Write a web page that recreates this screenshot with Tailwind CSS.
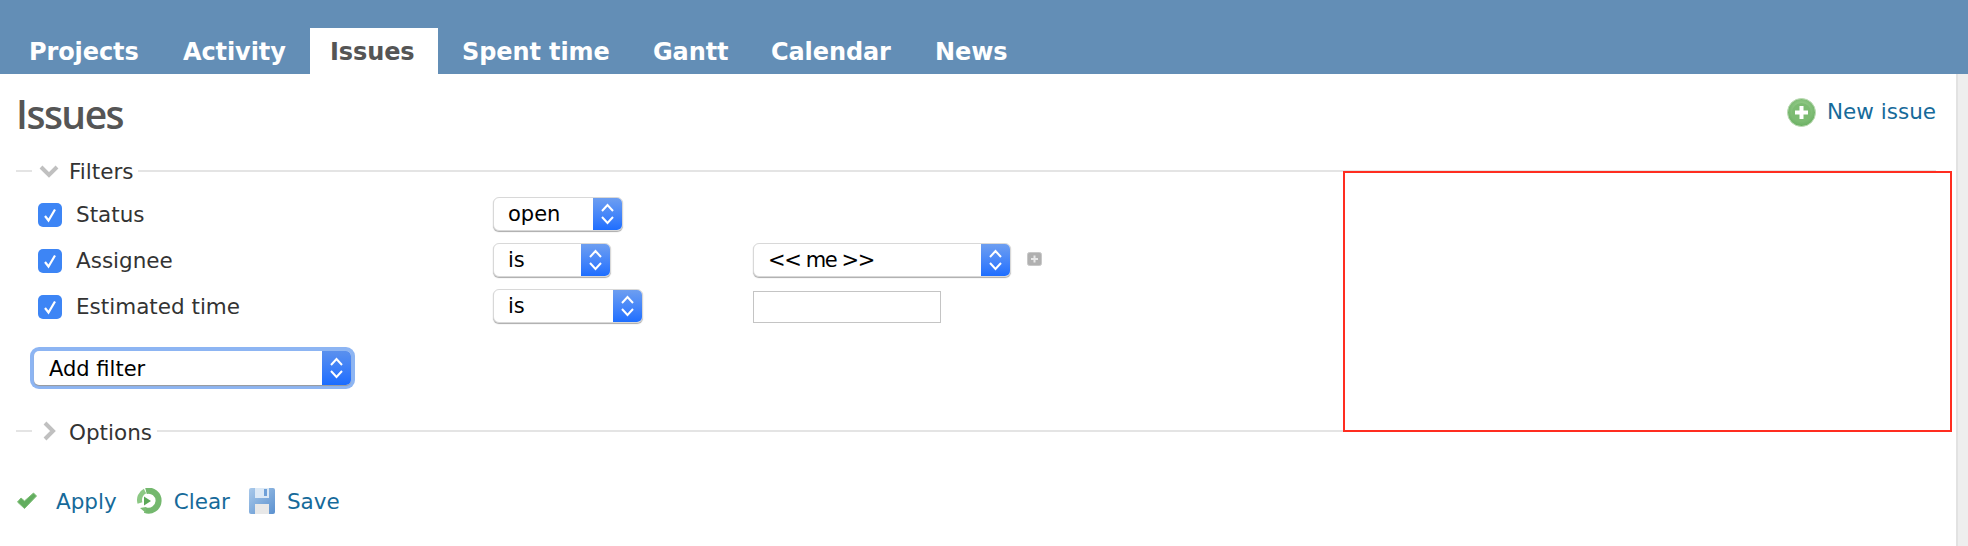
<!DOCTYPE html>
<html>
<head>
<meta charset="utf-8">
<script src="https://cdn.jsdelivr.net/npm/@tailwindcss/browser@4"></script>
</head>
<body class="m-0 bg-white overflow-hidden font-['DejaVu_Sans',sans-serif] text-[#333]">
<div class="relative w-[1968px] h-[546px] overflow-hidden flex flex-col">
  <header class="h-[74px] shrink-0 bg-[#638eb6] flex items-end pl-[9px] text-[24px] font-bold text-white leading-[48px] tracking-[-0.1px]">
    <a class="h-[46px] w-[154px] pl-[20px]">Projects</a>
    <a class="h-[46px] w-[147px] pl-[20px]">Activity</a>
    <a class="h-[46px] w-[128px] pl-[20px] bg-white text-[#555]">Issues</a>
    <a class="h-[46px] w-[195px] pl-[24px]">Spent time</a>
    <a class="h-[46px] w-[118px] pl-[20px]">Gantt</a>
    <a class="h-[46px] w-[164px] pl-[20px]">Calendar</a>
    <a class="h-[46px] pl-[20px]">News</a>
  </header>
  <div class="flex flex-1 min-h-0">
    <main class="flex-1 pl-[16px] pr-[20px] text-[21.5px]">
      <div class="h-[80px] flex justify-between items-center">
        <h2 class="text-[39px] font-['Open_Sans',sans-serif] font-semibold text-[#555] tracking-[-1.5px] -mt-[2px] leading-none">Issues</h2>
        <a class="flex items-center gap-[11px] text-[#166a9a] -mt-[4px]">
          <svg width="29" height="29" viewBox="0 0 29 29"><defs><radialGradient id="g1" cx="50%" cy="40%" r="60%"><stop offset="0" stop-color="#a6d69a"/><stop offset="1" stop-color="#6aaf62"/></radialGradient></defs><ellipse cx="14.5" cy="14.5" rx="14" ry="14" fill="url(#g1)" stroke="#bcdab4"/><circle cx="14.5" cy="14.5" r="9.5" fill="#7cbb72"/><path d="M14.5 8v13M8 14.5h13" stroke="#fff" stroke-width="4"/></svg>
          New issue
        </a>
      </div>

      <div class="h-[34px] flex items-center">
        <span class="w-[16px] h-[2px] bg-[#e4e4e4]"></span>
        <svg class="ml-[7px] mr-[10px]" width="20" height="14" viewBox="0 0 20 14"><path d="M2 3l8 8 8-8" fill="none" stroke="#c0c0c0" stroke-width="4"/></svg>
        <span class="leading-none text-[#333] mt-[2px]">Filters</span>
        <span class="ml-[5px] flex-1 h-[2px] bg-[#e4e4e4]"></span>
      </div>

      <div class="pt-[4px] pl-[22px] grid grid-cols-[455px_260px_1fr] auto-rows-[46px] items-center">
        <label class="flex items-center gap-[14px]"><span class="w-[24px] h-[24px] rounded-[5px] bg-[#3d85f5] flex items-center justify-center"><svg width="16" height="16" viewBox="0 0 16 16"><path d="M3 9l3.5 4.5L13 2.5" fill="none" stroke="#fff" stroke-width="2.2"/></svg></span>Status</label>
        <div class="w-[130px] h-[34px] -mt-[2px] rounded-[6px] bg-white border border-[#d8d8d8] shadow-[0_1px_1px_#aaa] flex items-center justify-between overflow-hidden text-black text-[21px]"><span class="pl-[14px] pt-[2px]">open</span><span class="w-[29px] h-[34px] bg-gradient-to-b from-[#6f9ff0] to-[#1a6cff] flex items-center justify-center"><svg width="15" height="24" viewBox="0 0 15 24"><path d="M2 9l5.5-6L13 9M2 15l5.5 6 5.5-6" fill="none" stroke="#fff" stroke-width="2"/></svg></span></div>
        <div></div>

        <label class="flex items-center gap-[14px]"><span class="w-[24px] h-[24px] rounded-[5px] bg-[#3d85f5] flex items-center justify-center"><svg width="16" height="16" viewBox="0 0 16 16"><path d="M3 9l3.5 4.5L13 2.5" fill="none" stroke="#fff" stroke-width="2.2"/></svg></span>Assignee</label>
        <div class="w-[118px] h-[34px] -mt-[2px] rounded-[6px] bg-white border border-[#d8d8d8] shadow-[0_1px_1px_#aaa] flex items-center justify-between overflow-hidden text-black text-[21px]"><span class="pl-[14px] pt-[2px]">is</span><span class="w-[29px] h-[34px] bg-gradient-to-b from-[#6f9ff0] to-[#1a6cff] flex items-center justify-center"><svg width="15" height="24" viewBox="0 0 15 24"><path d="M2 9l5.5-6L13 9M2 15l5.5 6 5.5-6" fill="none" stroke="#fff" stroke-width="2"/></svg></span></div>
        <div class="flex items-center">
          <div class="w-[258px] h-[34px] -mt-[2px] rounded-[6px] bg-white border border-[#d8d8d8] shadow-[0_1px_1px_#aaa] flex items-center justify-between overflow-hidden text-black text-[21px]"><span class="pl-[14px] pt-[2px] tracking-[-1.4px]">&lt;&lt; me &gt;&gt;</span><span class="w-[29px] h-[34px] bg-gradient-to-b from-[#6f9ff0] to-[#1a6cff] flex items-center justify-center"><svg width="15" height="24" viewBox="0 0 15 24"><path d="M2 9l5.5-6L13 9M2 15l5.5 6 5.5-6" fill="none" stroke="#fff" stroke-width="2"/></svg></span></div>
          <svg class="ml-[16px] -mt-[5px]" width="15" height="14" viewBox="0 0 15 14"><rect x=".5" y=".5" width="14" height="13" rx="2" fill="#b0b0b0" stroke="#c8c8c8"/><path d="M7.5 3.5v7M4 7h7" stroke="#e8e8e8" stroke-width="2"/></svg>
        </div>

        <label class="flex items-center gap-[14px]"><span class="w-[24px] h-[24px] rounded-[5px] bg-[#3d85f5] flex items-center justify-center"><svg width="16" height="16" viewBox="0 0 16 16"><path d="M3 9l3.5 4.5L13 2.5" fill="none" stroke="#fff" stroke-width="2.2"/></svg></span>Estimated time</label>
        <div class="w-[150px] h-[34px] -mt-[2px] rounded-[6px] bg-white border border-[#d8d8d8] shadow-[0_1px_1px_#aaa] flex items-center justify-between overflow-hidden text-black text-[21px]"><span class="pl-[14px] pt-[2px]">is</span><span class="w-[29px] h-[34px] bg-gradient-to-b from-[#6f9ff0] to-[#1a6cff] flex items-center justify-center"><svg width="15" height="24" viewBox="0 0 15 24"><path d="M2 9l5.5-6L13 9M2 15l5.5 6 5.5-6" fill="none" stroke="#fff" stroke-width="2"/></svg></span></div>
        <div class="w-[188px] h-[32px] border-[1.5px] border-[#c4c4c4] bg-white"></div>
      </div>

      <div class="mt-[17px] ml-[14px] w-[325px] h-[42px] rounded-[9px] bg-[#8db5f3] p-[4px]">
        <div class="h-[34px] rounded-[5px] bg-white flex items-center justify-between overflow-hidden text-black text-[21px] shadow-[0_1px_1px_#999]"><span class="pl-[15px] pt-[3px]">Add filter</span><span class="w-[29px] h-[34px] bg-gradient-to-b from-[#5a90ee] to-[#1a6cff] flex items-center justify-center"><svg width="15" height="24" viewBox="0 0 15 24"><path d="M2 9l5.5-6L13 9M2 15l5.5 6 5.5-6" fill="none" stroke="#fff" stroke-width="2"/></svg></span></div>
      </div>

      <div class="mt-[25px] h-[34px] flex items-center">
        <span class="w-[16px] h-[2px] bg-[#e4e4e4]"></span>
        <svg class="ml-[10px] mr-[13px]" width="14" height="20" viewBox="0 0 14 20"><path d="M3 2l8 8-8 8" fill="none" stroke="#c0c0c0" stroke-width="4"/></svg>
        <span class="leading-none text-[#333] mt-[3px]">Options</span>
        <span class="ml-[5px] flex-1 h-[2px] bg-[#e4e4e4]"></span>
      </div>

      <div class="mt-[33px] h-[40px] flex items-center text-[#166a9a]">
        <a class="flex items-center"><svg class="mr-[18px]" width="22" height="20" viewBox="0 0 22 20"><path d="M1.5 11l7 6.5L20.5 5 17.5 2 8.5 10 5 7z" fill="#62ad5f" stroke="#7fbf78" stroke-width="1"/></svg><span class="pt-[2px]">Apply</span></a>
        <a class="flex items-center ml-[20px]"><svg class="mr-[12px]" width="25" height="26" viewBox="0 0 25 26"><path d="M9 3a10 10 0 1 1-1 19" fill="none" stroke="#74b86e" stroke-width="6"/><path d="M3 15a10 10 0 0 1 5-12" fill="none" stroke="#8cc884" stroke-width="5"/><path d="M7 8.5l7 4.5-7 4.5z" fill="#5ca858"/><path d="M3 20l6-1v6z" fill="#7cbc74"/></svg><span class="pt-[2px]">Clear</span></a>
        <a class="flex items-center ml-[19px]"><svg class="mr-[12px]" width="26" height="26" viewBox="0 0 26 26"><defs><linearGradient id="g2" x1="0" y1="0" x2="1" y2="1"><stop offset="0" stop-color="#a9c9ea"/><stop offset="1" stop-color="#5a90cf"/></linearGradient></defs><rect x="0" y="0" width="26" height="26" rx="2" fill="url(#g2)"/><rect x="6" y="0" width="14" height="10" fill="#dce9f6"/><rect x="15" y="1" width="3" height="7" fill="#6fa0d8"/><rect x="6" y="16" width="14" height="10" fill="#e8e8e8"/></svg><span class="pt-[2px]">Save</span></a>
      </div>
    </main>
    <aside class="w-[12px] shrink-0 bg-[#eeeeee] border-l-2 border-[#e2e2e2]"></aside>
  </div>
  <div class="absolute left-[1343px] top-[171px] w-[609px] h-[261px] border-2 border-[#ff2d20]"></div>
</div>
</body>
</html>
